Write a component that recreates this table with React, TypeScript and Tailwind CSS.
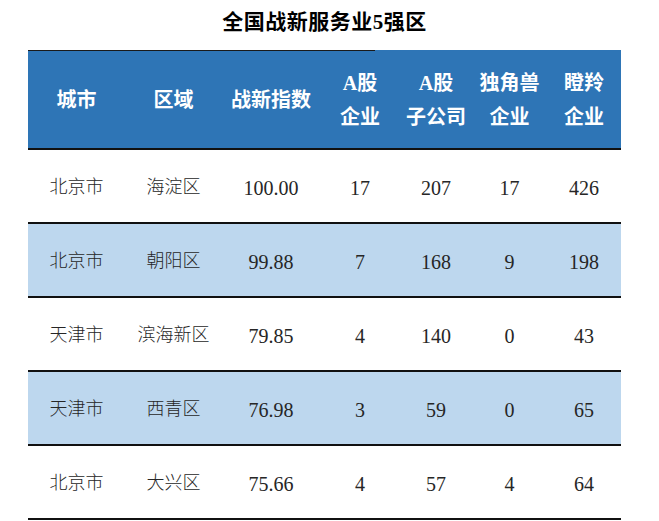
import React from "react";

const cols = "grid grid-cols-[97px_97px_98px_80px_72px_75px_74px]";

const rows: { c: string; d: string; v: string[]; blue: boolean }[] = [
  { c: "北京市", d: "海淀区", v: ["100.00", "17", "207", "17", "426"], blue: false },
  { c: "北京市", d: "朝阳区", v: ["99.88", "7", "168", "9", "198"], blue: true },
  { c: "天津市", d: "滨海新区", v: ["79.85", "4", "140", "0", "43"], blue: false },
  { c: "天津市", d: "西青区", v: ["76.98", "3", "59", "0", "65"], blue: true },
  { c: "北京市", d: "大兴区", v: ["75.66", "4", "57", "4", "64"], blue: false },
];

const headers: string[][] = [
  ["城市"],
  ["区域"],
  ["战新指数"],
  ["A股", "企业"],
  ["A股", "子公司"],
  ["独角兽", "企业"],
  ["瞪羚", "企业"],
];

export default function App() {
  return (
    <div className="w-[659px] h-[521px] bg-white font-['Liberation_Serif','Noto_Sans_CJK_SC',serif]">
      <div className="ml-[28px] w-[593px]">
        <div className="h-[50px] flex items-center justify-center pb-[4px]">
          <span className="text-[21px] font-semibold text-black tracking-[0.5px]">全国战新服务业5强区</span>
        </div>
        <div className="relative">
          <div className="absolute left-0 top-0 w-[347px] h-px bg-[#1a1a1a]" />
          <div className={`${cols} h-[100px] bg-[#2E75B6] border-b-2 border-[#111]`}>
            {headers.map((h, i) => (
              <div key={i} className="flex flex-col items-center justify-center text-white text-[20px] font-bold leading-[34px] pt-px">
                {h.map((t, j) => (
                  <span key={j}>{t}</span>
                ))}
              </div>
            ))}
          </div>
        </div>
        {rows.map((r, i) => (
          <div
            key={i}
            className={`${cols} h-[74px] border-b-2 border-[#111] ${r.blue ? "bg-[#BDD7EE]" : "bg-white"} text-[18px] text-[#262626] font-light`}
          >
            <div className="flex items-center justify-center pt-[3px]">{r.c}</div>
            <div className="flex items-center justify-center pt-[3px]">{r.d}</div>
            {r.v.map((v, j) => (
              <div key={j} className="flex items-center justify-center pt-[3px] text-[20px]">
                {v}
              </div>
            ))}
          </div>
        ))}
      </div>
    </div>
  );
}
